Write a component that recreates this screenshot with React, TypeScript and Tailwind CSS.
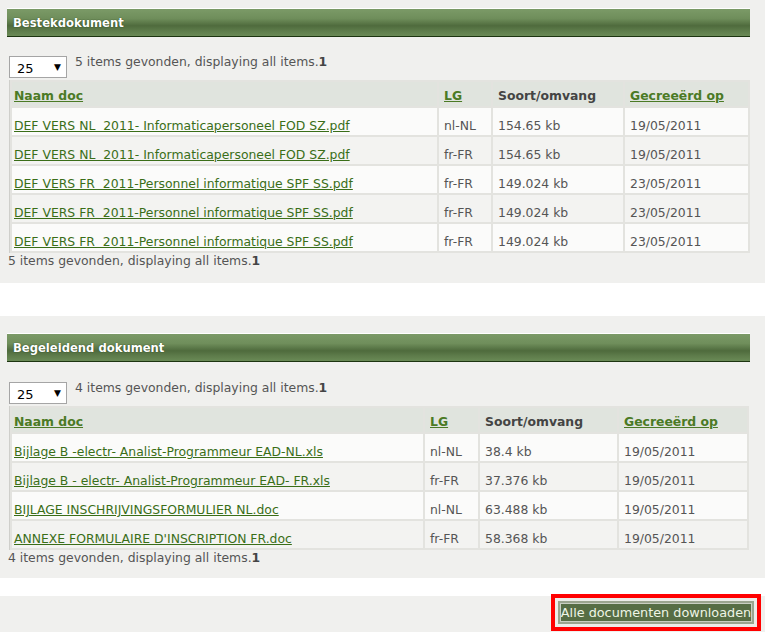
import React from "react";

type Row = { name: string; lg: string; size: string; date: string };

const rows1: Row[] = [
  { name: "DEF VERS NL  2011- Informaticapersoneel FOD SZ.pdf", lg: "nl-NL", size: "154.65 kb", date: "19/05/2011" },
  { name: "DEF VERS NL  2011- Informaticapersoneel FOD SZ.pdf", lg: "fr-FR", size: "154.65 kb", date: "19/05/2011" },
  { name: "DEF VERS FR  2011-Personnel informatique SPF SS.pdf", lg: "fr-FR", size: "149.024 kb", date: "23/05/2011" },
  { name: "DEF VERS FR  2011-Personnel informatique SPF SS.pdf", lg: "fr-FR", size: "149.024 kb", date: "23/05/2011" },
  { name: "DEF VERS FR  2011-Personnel informatique SPF SS.pdf", lg: "fr-FR", size: "149.024 kb", date: "23/05/2011" },
];

const rows2: Row[] = [
  { name: "Bijlage B -electr- Analist-Programmeur EAD-NL.xls", lg: "nl-NL", size: "38.4 kb", date: "19/05/2011" },
  { name: "Bijlage B - electr- Analist-Programmeur EAD- FR.xls", lg: "fr-FR", size: "37.376 kb", date: "19/05/2011" },
  { name: "BIJLAGE INSCHRIJVINGSFORMULIER NL.doc", lg: "nl-NL", size: "63.488 kb", date: "19/05/2011" },
  { name: "ANNEXE FORMULAIRE D'INSCRIPTION FR.doc", lg: "fr-FR", size: "58.368 kb", date: "19/05/2011" },
];

function Header({ title }: { title: string }) {
  return (
    <div className="ml-[7px] w-[743px] h-[29px] border-t border-t-white border-b border-b-[#1c3410] bg-[linear-gradient(to_bottom,#7b9a67_0%,#6f8e5b_35%,#4f6b3d_62%,#5d7b4a_80%,#6a8a56_100%)] flex items-center pl-[6px] pt-[2px]">
      <span className="text-white font-bold text-[11.6px] [text-shadow:0_0_1px_#1c3410]">{title}</span>
    </div>
  );
}

function Pager({ count }: { count: number }) {
  return (
    <div className="flex items-start ml-[9px]">
      <div className="w-[58px] h-[22px] border border-[#a5a5a5] bg-white flex items-center justify-between pl-[7px] pr-[5px] text-[13px] text-black">
        <span className="mt-[2px]">25</span>
        <span className="text-[9px] mt-[1px]">▼</span>
      </div>
      <div className="ml-[8px] -mt-[2px] text-[#555]">
        {count} items gevonden, displaying all items.<b className="text-[#444]">1</b>
      </div>
    </div>
  );
}

function DocTable({ rows, widths }: { rows: Row[]; widths: [string, string, string, string] }) {
  return (
    <table className="ml-[9px] table-fixed border-separate border-spacing-[2px] bg-[#e3e3df] border-l border-l-[#cfcfcb]">
      <colgroup>
        <col className={widths[0]} />
        <col className={widths[1]} />
        <col className={widths[2]} />
        <col className={widths[3]} />
      </colgroup>
      <thead>
        <tr className="h-[24px] bg-[#e0e4de] text-left">
          <th className="pl-[2px] pr-[5px] pt-[3px] font-bold"><a className="text-[#4b7a25] underline">Naam doc</a></th>
          <th className="px-[5px] pt-[3px] font-bold"><a className="text-[#4b7a25] underline">LG</a></th>
          <th className="px-[5px] pt-[3px] font-bold text-[#444]">Soort/omvang</th>
          <th className="px-[5px] pt-[3px] font-bold"><a className="text-[#4b7a25] underline">Gecreeërd op</a></th>
        </tr>
      </thead>
      <tbody>
        {rows.map((r, i) => (
          <tr key={i} className={"h-[27px] " + (i % 2 === 0 ? "bg-[#fbfbfa]" : "bg-[#f3f3f1]")}>
            <td className="pl-[2px] pr-[5px] pb-[2px] align-bottom"><a className="text-[#3a6e18] underline whitespace-pre">{r.name}</a></td>
            <td className="px-[5px] pb-[2px] align-bottom text-[#555]">{r.lg}</td>
            <td className="px-[5px] pb-[2px] align-bottom text-[#555]">{r.size}</td>
            <td className="px-[5px] pb-[2px] align-bottom text-[#555]">{r.date}</td>
          </tr>
        ))}
      </tbody>
    </table>
  );
}

export default function App() {
  return (
    <div className="w-[765px] h-[632px] bg-white overflow-hidden font-['DejaVu_Sans',Verdana,sans-serif] text-[12.4px] leading-[15px]">
      <section className="bg-[#f0f0ee] h-[283px] pt-[8px]">
        <Header title="Bestekdokument" />
        <div className="h-[19px]" />
        <Pager count={5} />
        <div className="h-[2px]" />
        <DocTable rows={rows1} widths={["w-[425px]", "w-[52px]", "w-[130px]", "w-[123px]"]} />
        <div className="ml-[8px] text-[#555]">
          5 items gevonden, displaying all items.<b className="text-[#444]">1</b>
        </div>
      </section>
      <div className="h-[33px]" />
      <section className="bg-[#f0f0ee] h-[262px] pt-[17px]">
        <Header title="Begeleidend dokument" />
        <div className="h-[20px]" />
        <Pager count={4} />
        <div className="h-[2px]" />
        <DocTable rows={rows2} widths={["w-[411px]", "w-[53px]", "w-[137px]", "w-[128px]"]} />
        <div className="ml-[8px] text-[#555]">
          4 items gevonden, displaying all items.<b className="text-[#444]">1</b>
        </div>
      </section>
      <div className="h-[18px]" />
      <section className="bg-[#f0f0ee] h-[36px] flex justify-end pr-[4px]">
        <div className="-mt-[2px] h-[37px] border-[4px] border-[#ff0000] p-[3px] bg-[#ecece8]">
          <button className="w-[196px] h-[23px] p-0 flex items-center justify-center bg-[#566d44] border-[2px] border-[#9aa48e] outline outline-1 outline-[#c9cfc2] -outline-offset-[3px] text-[#eef5e6] text-[12.8px] leading-[17px] font-['DejaVu_Sans',Verdana,sans-serif]">
            Alle documenten downloaden
          </button>
        </div>
      </section>
    </div>
  );
}
